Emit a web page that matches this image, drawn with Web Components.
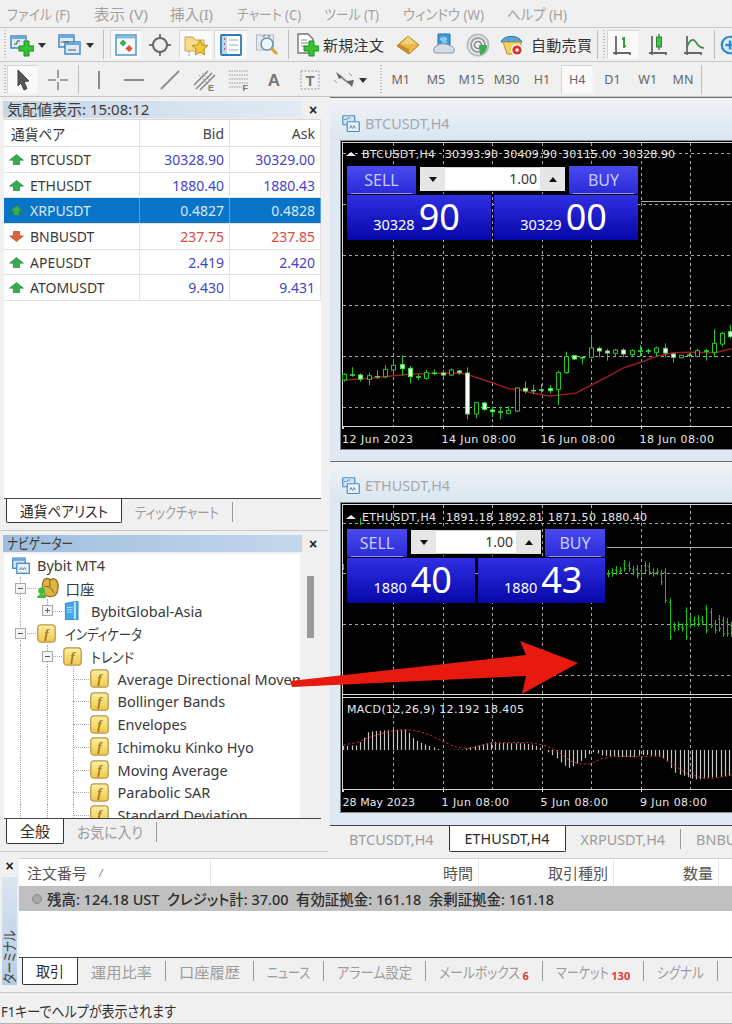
<!DOCTYPE html>
<html lang="ja">
<head>
<meta charset="utf-8">
<title>MT4</title>
<style>
  html, body { margin: 0; height: 1024px; overflow: hidden; background: #f0f0f0; }
  body { font-family: "Noto Sans", "Noto Sans CJK JP", sans-serif; font-size: 14px; color: #333; position: relative; font-feature-settings: "palt"; }
  .main { display: flex; height: 758px; }
  .left { width: 328px; flex: none; display: flex; flex-direction: column; }
</style>
</head>
<body>
  <mt-menubar></mt-menubar>
  <mt-toolbar row="1"></mt-toolbar>
  <mt-toolbar row="2"></mt-toolbar>
  <div class="main">
    <div class="left">
      <mt-panel label="気配値表示: 15:08:12" tone="pale" height="434"><mt-market-watch></mt-market-watch></mt-panel>
      <mt-panel label="ナビゲーター" label-w="66" tone="deep" height="321"><mt-navigator></mt-navigator></mt-panel>
    </div>
    <mt-mdi>
      <mt-chart-window label="BTCUSDT,H4" chart="btc" height="364" head="43"></mt-chart-window>
      <mt-chart-window label="ETHUSDT,H4" chart="eth" height="364" head="41"></mt-chart-window>
      <mt-tabs tabs="BTCUSDT,H4|ETHUSDT,H4|XRPUSDT,H4|BNBUSDT,H4" active="1" start="4" height="27" pad="15" size="14.4"></mt-tabs>
    </mt-mdi>
  </div>
  <mt-terminal></mt-terminal>
  <mt-statusbar><span data-w="175">F1キーでヘルプが表示されます</span></mt-statusbar>
  <mt-arrow></mt-arrow>

<script>
// Meiryo UI kana are narrower than Noto's: squeeze a text to the width it has in the shot
const fit = root => root.querySelectorAll("[data-w]").forEach(e => {
  e.style.display = "inline-block";
  e.style.flex = "none";
  e.style.whiteSpace = "pre";
  const w = +e.dataset.w, natural = e.getBoundingClientRect().width;
  e.style.width = `${w}px`;
  e.style.transform = `scaleX(${w / natural})`;
  e.style.transformOrigin = "0 50%";
});

const svg = (s, w = 24, h = 24) => `<svg width="${w}" height="${h}" viewBox="0 0 24 24">${s}</svg>`;

const plus = `<path d="M14 8h5v5h5v5h-5v5h-5v-5H9v-5h5z" fill="#35c335" stroke="#1d8f1d"/>`;
const tinyWin = (x, y) => `<rect x="${x}" y="${y}" width="15" height="12" fill="#dcebf8" stroke="#3d7fb8" stroke-width="1.4"/><rect x="${x}" y="${y}" width="15" height="3" fill="#6ea6d6"/>`;
const axes = `<path d="M5 3v17M19 20H2M5 20v2M19 19v3" stroke="#666" stroke-width="1.8" fill="none"/>`;

const icons = {
  newChart: svg(`${tinyWin(1, 3)}<path d="M4 11h3V8h3" stroke="#555" fill="none"/>${plus}`),
  profile: svg(`${tinyWin(1, 2)}${tinyWin(7, 9)}<path d="M3 9h8M10 17h8" stroke="#555" fill="none"/>`),
  market: svg(`<rect x="2" y="2" width="20" height="20" fill="#f6f9fc" stroke="#5b9ccb" stroke-width="1.6"/><rect x="3" y="3" width="18" height="2.5" fill="#8abce0"/><path d="M9 6.5l3.5 3.5L9 13.5 5.5 10z" fill="#3cae55"/><path d="M15 12l3.5 3.5L15 19l-3.5-3.5z" fill="#e0562c"/>`),
  cross: svg(`<path d="M12 1v22M1 12h22" stroke="#777" stroke-width="2"/><circle cx="12" cy="12" r="7" fill="#f0f0f0" stroke="#666" stroke-width="2"/>`),
  folder: svg(`<path d="M1 4h8l2 3h9v11H1z" fill="#f6dc8a" stroke="#c9a64a"/><path d="M16 7l2.4 5 5.4.6-4 3.8 1 5.4-4.8-2.6-4.8 2.6 1-5.4-4-3.8 5.4-.6z" fill="#f2c53d" stroke="#b98f1f"/><path d="M5 18v5" stroke="#999" stroke-dasharray="2 1"/>`),
  list: svg(`<rect x="2" y="2" width="20" height="20" rx="1" fill="#fff" stroke="#2d7ab8" stroke-width="1.8"/><rect x="3" y="3" width="5" height="18" fill="#b8d8f0"/><path d="M10 7h9M10 12h9M10 17h9" stroke="#9ab" /><path d="M5 6h1M5 11h1M5 16h1" stroke="#e04040" stroke-width="2"/>`),
  mag: svg(`<rect x="1.5" y="2" width="17" height="15" fill="#e6e8ee" stroke="#b0b8c4"/><circle cx="12" cy="11" r="6" fill="#eef6fc" stroke="#6f95b5" stroke-width="1.6"/><path d="M8 4l2-2M15 4l-2-2" stroke="#6f95b5" stroke-width="1.5"/><path d="M16 15l6 6" stroke="#d9a53a" stroke-width="3"/>`),
  order: svg(`<path d="M3 1h10l5 5v14H3z" fill="#fff" stroke="#777" stroke-width="1.4"/><path d="M6 7h6M6 10h8M6 13h4" stroke="#888"/>${plus}`),
  gold: svg(`<path d="M12 3l11 9-10 9L1 13z" fill="#e9b94a" stroke="#a67c1f"/><path d="M12 3l8 8H6z" fill="#f3d27d"/><path d="M1 13l12 8v-5L3 11z" fill="#c08f2a"/>`),
  server: svg(`<path d="M6 1h12v11H6z" fill="#3d9be0" stroke="#1f6fb0"/><path d="M9 5h5v2h-5zM10 9h5" stroke="#d4ecfb" fill="none"/><path d="M3 20a4 4 0 0 1 2-7c1-3 11-3 13 0a4 4 0 0 1 3 7z" fill="#d6dde4" stroke="#8b99a8"/>`),
  signal: svg(`<circle cx="12" cy="12" r="10.5" fill="none" stroke="#b8bec3" stroke-width="2"/><circle cx="12" cy="12" r="7" fill="none" stroke="#9aa2a8" stroke-width="2"/><circle cx="12" cy="12" r="3.5" fill="none" stroke="#7d868d" stroke-width="1.6"/><path d="M13 12h8a9 9 0 0 1-7 10z" fill="#3dab4f"/>`),
  auto: svg(`<path d="M1 9c2-7 17-8 21 0z" fill="#56a4d8" stroke="#2d76aa"/><path d="M3 9h18v12H7z" fill="#f3d060" stroke="#bd9631"/><circle cx="17" cy="17" r="6" fill="#fff"/><circle cx="17" cy="17" r="4.6" fill="#d8322a"/><circle cx="17" cy="17" r="1.8" fill="#fff"/>`),
  bars: svg(`${axes}<path d="M13 4v11M13 6h-2M13 13h2" stroke="#2da838" stroke-width="2" fill="none"/>`),
  candle: svg(`${axes}<path d="M12 1v16" stroke="#333"/><rect x="9.5" y="4" width="5" height="10" fill="#45c04a" stroke="#2a8a2e"/>`),
  line: svg(`${axes}<path d="M5 14c3-8 6-8 8-6s3 7 9 7" stroke="#2f8f3c" stroke-width="1.6" fill="none"/>`),
  zoomIn: svg(`<circle cx="12" cy="12" r="9" fill="#d8ecfa" stroke="#2f88cc" stroke-width="2.4"/><path d="M12 7v10M7 12h10" stroke="#2f88cc" stroke-width="2.6"/>`),
  cursor: svg(`<path d="M7 2l11 11-5 .6 3 7-3 1.4-3-7L7 18z" fill="#555" stroke="#444"/>`),
  thin: svg(`<path d="M12 2v8M12 14v8M2 12h8M14 12h8" stroke="#888" stroke-width="1.6"/>`),
  vline: svg(`<path d="M12 3v18" stroke="#8a8a8a" stroke-width="2"/>`),
  hline: svg(`<path d="M2 12h20" stroke="#8a8a8a" stroke-width="2"/>`),
  trend: svg(`<path d="M3 21L21 3" stroke="#8a8a8a" stroke-width="1.8"/>`),
  channel: svg(`<path d="M1 17L15 3M3 21L19 5M7 22L22 7" stroke="#888" stroke-width="1.6"/><path d="M6 7l9 9M9 5l8 8" stroke="#999" stroke-dasharray="2 1"/><text x="15" y="22.5" font-size="9" font-weight="700" font-family="Liberation Sans" fill="#777">E</text>`),
  fib: svg(`<path d="M2 3h20M2 7h20M2 11h20M2 15h20M2 19h13" stroke="#999" stroke-dasharray="1.5 1"/><text x="15.5" y="22.5" font-size="9" font-weight="700" font-family="Liberation Sans" fill="#777">F</text>`),
  textA: svg(`<text x="12" y="18" text-anchor="middle" font-size="17" font-weight="700" font-family="Liberation Sans" fill="#777">A</text>`),
  textT: svg(`<rect x="3" y="3" width="18" height="18" fill="none" stroke="#999" stroke-dasharray="2 1.5"/><text x="12" y="18" text-anchor="middle" font-size="15" font-weight="700" font-family="Liberation Sans" fill="#777">T</text>`),
  arrows: svg(`<path d="M3 4l7 5-4 2z" fill="#666"/><path d="M8 9l9 7" stroke="#888" stroke-width="1.6"/><path d="M14 13l7-1-2 7z" fill="#666"/><path d="M1 12l3 3M16 5l3 3" stroke="#999"/>`),
  up: svg(`<path d="M12 4l11 9h-6v7H7v-7H1z" fill="#35ad50" stroke="#1d7a34"/>`, 15, 15),
  down: svg(`<path d="M12 20L1 11h6V4h10v7h6z" fill="#e0603a" stroke="#b33e1e"/>`, 15, 15),
  winTitle: svg(`<rect x="1" y="1" width="16" height="12" rx="1" fill="#cfe3f5" stroke="#4b8ec6" stroke-width="1.6"/><rect x="7" y="9" width="16" height="13" rx="1" fill="#e8f2fb" stroke="#4b8ec6" stroke-width="1.6"/><path d="M10 18l2-4 2 4 2-4 2 4" stroke="#4b6e8e" fill="none"/><path d="M3 6h3l2-2h3" stroke="#4b6e8e" fill="none"/>`, 18, 18),
  terminal: svg(`<rect x="2" y="4" width="15" height="12" fill="#cfe3f5" stroke="#4b8ec6" stroke-width="1.6"/><rect x="7" y="10" width="15" height="12" fill="#e8f2fb" stroke="#4b8ec6" stroke-width="1.6"/><rect x="2" y="3" width="15" height="4" fill="#6ea6d6"/><path d="M10 18l2-3 2 3 2-3 2 3" stroke="#4b6e8e" fill="none"/>`, 20, 20),
  accounts: svg(`<path d="M7 4c2-3 5-3 7-1 3-2 7-1 8 2 2 4 1 12-2 15-3 2-8 2-11 0-3-4-4-12-2-16z" fill="#dcb444" stroke="#8e7020" stroke-width="1.4"/><path d="M14 3v8l5 7M8 10l6 1" stroke="#7a6018" fill="none"/><circle cx="5" cy="15" r="3.6" fill="#3dbb3d"/><path d="M0 23c1-6 9-6 10 0z" fill="#3dbb3d"/>`, 22, 22),
  serverBlue: svg(`<path d="M3 3l16-3v24H3z" fill="#45a6e8" stroke="#1f78b8"/><path d="M15 1v22" stroke="#bfe3fa" stroke-width="2.4"/><path d="M5 8h7M5 11h7M5 14h7" stroke="#d5eefc"/>`, 19, 19),
  func: svg(`<defs><linearGradient id="fy" x1="0" y1="0" x2="0" y2="1"><stop offset="0" stop-color="#fbf0a4"/><stop offset="1" stop-color="#eec94a"/></linearGradient></defs><rect x="1" y="1" width="22" height="22" rx="4" fill="url(#fy)" stroke="#b9974a" stroke-width="1.6"/><text x="12" y="18" text-anchor="middle" font-size="17" font-style="italic" font-weight="700" font-family="Liberation Serif" fill="#a8781a">f</text>`, 19, 19),
};

/* ---- chrome ---- */
class MtMenubar extends HTMLElement {
  connectedCallback() {
    if (this.shadowRoot) return;
    const items = [["ファイル (F)", 87, 63], ["表示 (V)", 76, 54], ["挿入(I)", 67, 43], ["チャート (C)", 87, 64], ["ツール (T)", 79, 55], ["ウィンドウ (W)", 104, 81], ["ヘルプ (H)", 80, 60]];
    this.attachShadow({ mode: "open" });
    this.shadowRoot.innerHTML = `<style>
      :host { display: flex; height: 27px; border-bottom: 1px solid #c6c6c6; padding-left: 7px; align-items: center; color: #a2a2a2; font-size: 14.5px; white-space: nowrap; }
      div { flex: none; }
    </style>${items.map(([t, w, tw]) => `<div style="width:${w}px"><span data-w="${tw}">${t}</span></div>`).join("")}`;
    fit(this.shadowRoot);
  }
}

const toolbars = {
  1: [["grip", 6], ["icon", "newChart", 27], ["drop", 13], ["gap", 8], ["icon", "profile", 28], ["drop", 12], ["sep", 14],
      ["on", "market", 31], ["icon", "cross", 38], ["on", "folder", 33], ["gap", 2], ["on", "list", 33], ["icon", "mag", 39], ["sep", 4],
      ["icon", "order", 33], ["text", "新規注文", 64], ["icon", "gold", 42], ["icon", "server", 30], ["icon", "signal", 37], ["icon", "auto", 31], ["gap", 4],
      ["text", "自動売買", 62], ["sep", 8], ["grip", 6], ["on", "bars", 32], ["icon", "candle", 40], ["icon", "line", 30], ["sep", 10], ["icon", "zoomIn", 22]],
  2: [["grip", 5], ["on", "cursor", 31], ["icon", "thin", 39], ["sep", 2], ["icon", "vline", 40], ["icon", "hline", 30], ["icon", "trend", 42],
      ["icon", "channel", 28], ["icon", "fib", 40], ["icon", "textA", 30], ["icon", "textT", 42], ["icon", "arrows", 28], ["drop", 8], ["gap", 11], ["grip", 5],
      ["tf", "M1"], ["tf", "M5"], ["tf", "M15"], ["tf", "M30"], ["tf", "H1"], ["tfOn", "H4"], ["tf", "D1"], ["tf", "W1"], ["tf", "MN"], ["sep", 2]],
};

class MtToolbar extends HTMLElement {
  connectedCallback() {
    if (this.shadowRoot) return;
    const row = this.getAttribute("row");
    const html = toolbars[row].map(it => {
      const [kind, a, b] = it;
      switch (kind) {
        case "grip": return `<i class="grip" style="width:${a}px"></i>`;
        case "gap": return `<i style="width:${a}px;flex:none"></i>`;
        case "sep": return `<i class="sep" style="width:${a}px"></i>`;
        case "drop": return `<i class="drop" style="width:${a}px"></i>`;
        case "icon": return `<span class="btn" style="width:${b}px">${icons[a]}</span>`;
        case "on": return `<span class="btn on" style="width:${b}px">${icons[a]}</span>`;
        case "text": return `<span class="btn txt" style="width:${b}px">${a}</span>`;
        case "tf": return `<span class="btn tf">${a}</span>`;
        case "tfOn": return `<span class="btn tf on">${a}</span>`;
      }
    }).join("");
    this.attachShadow({ mode: "open" });
    this.shadowRoot.innerHTML = `<style>
      :host { display: flex; align-items: stretch; box-sizing: border-box; border-bottom: 1px solid #c6c6c6; overflow: hidden; height: ${row == 1 ? 34 : 35}px; padding: ${row == 1 ? 2 : 3}px 0 2px 2px; }
      .btn { flex: none; display: flex; align-items: center; justify-content: center; box-sizing: border-box; overflow: hidden; }
      .on { background: #fafafa; border: 1px solid #d6d6d6; border-right-color: #f6f6f6; border-bottom-color: #f6f6f6; }
      .txt { font-size: 15px; color: #333; white-space: nowrap; justify-content: flex-start; letter-spacing: .3px; }
      .tf { width: 35.3px; font-size: 12.5px; color: #666; }
      .tf.on { margin: 0 1.6px; width: 32.1px; }
      .grip { flex: none; background: repeating-linear-gradient(#b8b8b8 0 1px, transparent 1px 3px) center / 2px 100% no-repeat; }
      .sep { flex: none; background: linear-gradient(#bdbdbd, #bdbdbd) center / 1px 100% no-repeat; }
      .drop { flex: none; position: relative; }
      .drop::after { content: ""; position: absolute; left: 50%; top: 50%; margin: -2px 0 0 -4px; border: 4px solid transparent; border-top: 5px solid #333; border-bottom: 0; }
    </style>${html}`;
  }
}

class MtPanel extends HTMLElement {
  connectedCallback() {
    if (this.shadowRoot) return;
    const deep = this.getAttribute("tone") == "deep";
    const w = this.getAttribute("label-w");
    this.attachShadow({ mode: "open" });
    this.shadowRoot.innerHTML = `<style>
      :host { display: flex; flex-direction: column; height: ${this.getAttribute("height")}px; box-sizing: border-box; padding-top: 4px; border-bottom: 1px solid #c9c9c9; }
      .head { display: flex; height: 17px; flex: none; align-items: center; }
      .title { width: 299px; margin-left: 3px; height: 100%; box-sizing: border-box; padding-left: 4px; line-height: 16px; font-size: 15px; color: #3c3c3c; white-space: nowrap;
        background: linear-gradient(90deg, ${deep ? "#9fbddd, #c4d7ec" : "#c6d6e6, #e2ebf4"}); }
      .x { width: 22px; text-align: center; font: 700 14px "Liberation Sans", sans-serif; color: #222; }
      .body { flex: 1; min-height: 0; margin: 1px 7px 0 4px; display: flex; flex-direction: column; }
    </style><div class="head"><div class="title"><span ${w ? `data-w="${w}"` : ""}>${this.getAttribute("label")}</span></div><div class="x">×</div></div><div class="body"><slot></slot></div>`;
    fit(this.shadowRoot);
  }
}

class MtTabs extends HTMLElement {
  connectedCallback() {
    if (this.shadowRoot) return;
    const active = +this.getAttribute("active");
    const tabs = this.getAttribute("tabs").split("|");
    const html = tabs.map((t, i) => {
      const [text, badge] = t.split("^");
      const [label, w] = text.split(":");
      const sep = i != active && i != active - 1;
      return `<div class="tab ${i == active ? "on" : ""}"><span ${w ? `data-w="${w}"` : ""}>${label}</span>${badge ? `<b>${badge}</b>` : ""}</div>${sep ? '<i class="sep"></i>' : ""}`;
    }).join("");
    const pad = +this.getAttribute("pad") || 13;
    this.attachShadow({ mode: "open" });
    this.shadowRoot.innerHTML = `<style>
      :host { display: flex; flex: none; height: ${this.getAttribute("height")}px; box-sizing: border-box; border-top: 1.5px solid #444; padding-left: ${this.getAttribute("start") || 0}px; overflow: hidden; white-space: nowrap; align-items: flex-start; font-size: ${this.getAttribute("size") || 15}px; color: #9c9c9c; }
      .tab { flex: none; height: 100%; padding: 0 ${pad}px; display: flex; align-items: center; box-sizing: border-box; }
      .on { background: #fff; color: #2c2c2c; border: 1.5px solid #333; border-top: 0; border-radius: 0 0 2px 2px; margin-top: -1px; height: calc(100% + 1px); padding: 0 ${pad}px; }
      .sep { flex: none; width: 1px; height: 20px; margin-top: 3px; background: #9a9a9a; }
      b { color: #e23a3a; font-size: 11px; align-self: flex-end; margin: 0 0 1px 2.5px; line-height: 16px; }
    </style>${html}`;
    fit(this.shadowRoot);
  }
}

/* ---- market watch ---- */
class MtMarketWatch extends HTMLElement {
  connectedCallback() {
    if (this.shadowRoot) return;
    const rows = [
      ["BTCUSDT", "30328.90", "30329.00", "up"], ["ETHUSDT", "1880.40", "1880.43", "up"], ["XRPUSDT", "0.4827", "0.4828", "up", "sel"],
      ["BNBUSDT", "237.75", "237.85", "down"], ["APEUSDT", "2.419", "2.420", "up"], ["ATOMUSDT", "9.430", "9.431", "up"],
    ];
    const body = rows.map(([s, b, a, d, sel]) => `<div class="row ${d} ${sel || ""}">
      <div class="sym">${icons[d]}<span>${s}</span></div><div class="num">${b}</div><div class="num">${a}</div></div>`).join("");
    this.attachShadow({ mode: "open" });
    this.shadowRoot.innerHTML = `<style>
      :host { display: flex; flex-direction: column; flex: 1; min-height: 0; font-size: 14px; }
      .table { flex: 1; background: #fff; border-top: 1px solid #d8d8d8; }
      .row { display: grid; grid-template-columns: 136px 90px 91px; height: 25.7px; box-sizing: border-box; border-bottom: 1px solid #e2e2e2; align-items: stretch; }
      .row > div { display: flex; align-items: center; border-right: 1px solid #e4e4e4; box-sizing: border-box; }
      .head { height: 27px; color: #444; }
      .head .num { color: #444; }
      .sym { padding-left: 5px; gap: 6px; color: #3a3a3a; }
      .sym svg { flex: none; }
      .head .sym { padding-left: 7px; font-size: 15px; }
      .num { justify-content: flex-end; padding-right: 5px; }
      .up .num { color: #4444cc; }
      .down .num { color: #e04848; }
      .sel { background: #0a74c9; }
      .sel .sym, .sel .num { color: #d7e8f7; }
      .sel > div { border-right-color: #5aa0d8; }
    </style><div class="table">
      <div class="row head"><div class="sym"><span data-w="54">通貨ペア</span></div><div class="num">Bid</div><div class="num">Ask</div></div>${body}
    </div><mt-tabs tabs="通貨ペアリスト:88|ティックチャート:84" active="0" start="2" height="25"></mt-tabs><div style="height:7px"></div>`;
    fit(this.shadowRoot);
  }
}

/* ---- navigator ---- */
class MtNavigator extends HTMLElement {
  connectedCallback() {
    if (this.shadowRoot) return;
    const indi = ["Average Directional Movement Index", "Bollinger Bands", "Envelopes", "Ichimoku Kinko Hyo", "Moving Average", "Parabolic SAR", "Standard Deviation"];
    const rows = [
      { d: 0, icon: "terminal", t: "Bybit MT4" },
      { d: 1, icon: "accounts", t: "口座", tog: "-", g: [], lm: 7 },
      { d: 2, icon: "serverBlue", t: "BybitGlobal-Asia", tog: "+", g: [1], last: true },
      { d: 1, icon: "func", t: "インディケータ", tog: "-", g: [], w: 77 },
      { d: 2, icon: "func", t: "トレンド", tog: "-", g: [1], w: 43 },
      ...indi.map(t => ({ d: 3, icon: "func", t, g: [1, 1] })),
    ];
    const html = rows.map(r => {
      if (!r.d) return `<div class="row root"><span class="ic">${icons[r.icon]}</span><span class="lb">${r.t}</span></div>`;
      const guides = r.g.map(() => `<i class="cell guide"></i>`).join("");
      const tog = r.tog ? `<i class="tog ${r.tog == "+" ? "plus" : ""}"></i>` : "";
      const lm = r.lm ? ` style="margin-left:${r.lm}px"` : "";
      return `<div class="row">${guides}<i class="cell conn ${r.last ? "last" : ""}">${tog}</i><span class="ic">${icons[r.icon]}</span><span class="lb"${lm}${r.w ? ` data-w="${r.w}"` : ""}>${r.t}</span></div>`;
    }).join("");
    this.attachShadow({ mode: "open" });
    this.shadowRoot.innerHTML = `<style>
      :host { display: flex; flex-direction: column; flex: 1; min-height: 0; margin-top: 1px; font-size: 14.5px; }
      .wrap { flex: 1; min-height: 0; display: flex; overflow: hidden; }
      .tree { width: 296px; flex: none; background: #fff; overflow: hidden; }
      .scroll { flex: 1; padding: 22px 0 0 7px; }
      .thumb { width: 7px; height: 62px; background: #9a9a9a; }
      .row { display: flex; align-items: center; height: 22.7px; padding-left: 3px; white-space: nowrap; color: #3a3a3a; }
      .root { padding-left: 7px; }
      .root .lb { margin-left: 6px; }
      .cell { flex: none; position: relative; width: 26.5px; height: 100%; }
      .guide::before, .conn::before { content: ""; position: absolute; left: 13px; top: 0; bottom: 0; border-left: 1px dotted #a8a8a8; }
      .conn.last::before { bottom: 50%; }
      .conn::after { content: ""; position: absolute; left: 13px; right: -2px; top: 50%; border-top: 1px dotted #a8a8a8; }
      .tog { position: absolute; z-index: 1; left: 8px; top: 50%; margin-top: -5.5px; width: 11px; height: 11px; box-sizing: border-box; border: 1px solid #a9a9a9; background: linear-gradient(90deg, transparent 2px, #555 2px, #555 7px, transparent 7px) center / 100% 1px no-repeat, #f4f4f4; }
      .tog.plus { background: linear-gradient(90deg, transparent 2px, #4a6fa5 2px, #4a6fa5 7px, transparent 7px) center / 100% 1px no-repeat, linear-gradient(transparent 2px, #4a6fa5 2px, #4a6fa5 7px, transparent 7px) center / 1px 100% no-repeat, #f4f4f4; }
      .ic { flex: none; margin-left: 3px; display: flex; }
      .root .ic { margin-left: 0; }
      .lb { margin-left: 9px; }
    </style><div class="wrap"><div class="tree">${html}</div><div class="scroll"><div class="thumb"></div></div></div>
    <mt-tabs tabs="全般:30|お気に入り:66" active="0" start="2" height="26"></mt-tabs><div style="height:7px"></div>`;
    fit(this.shadowRoot);
  }
}

/* ---- charts ---- */
const gridX = [393, 443, 492, 542, 591, 641, 690];
const lerp = (pts, x) => {
  for (let i = 1; i < pts.length; i++) {
    if (x <= pts[i][0]) {
      const [x0, y0] = pts[i - 1], [x1, y1] = pts[i];
      return y0 + (y1 - y0) * (x - x0) / (x1 - x0);
    }
  }
  return pts[pts.length - 1][1];
};

const lbl = ([x, len, t], y) => `<text x="${x}" y="${y}" class="lbl" textLength="${len}" lengthAdjust="spacing">${t}</text>`;

const frame = (top, grids, axisY, labels, head, headY, bottom) => {
  let s = `<rect x="340" y="${top}" width="392" height="${bottom - top}" fill="#000"/>`;
  s += grids.map(y => `<path d="M343 ${y}.5H732" class="grid"/>`).join("");
  s += gridX.map(x => `<path d="M${x}.5 ${top + 3}V${axisY}" class="grid"/>`).join("");
  s += `<path d="M342.5 ${top + 2}V${axisY + 3}M342.5 ${top + 2}.5H732M343 ${axisY}.5H732" class="axis"/>`;
  s += [343, 443, 542, 641].map(x => `<path d="M${x}.5 ${axisY}v3" class="axis"/>`).join("");
  s += labels.map(l => lbl(l, axisY + 17)).join("");
  s += `<path d="M346 ${headY - 2}l5-4 5 4z" fill="#eee"/>` + head.map(l => lbl(l, headY)).join("");
  s += `<path d="M340.5 ${top}V${bottom - .5}H732M340 ${top}.5H732" fill="none" stroke="#8a8a8a"/>`;
  return s;
};

const drawBtc = () => {
  const cs = [[283,300,280,305,0],[285,285,262,290,2],[285,297,280,305,1],[287,298,278,316,0],[290,290,270,297,2],[268,290,256,295,0],[256,270,238,285,0],[254,266,226,287,1],[265,290,258,310,1],[291,291,283,300,2],[278,295,270,300,0],[280,280,268,285,2],[279,285,270,295,1],[270,285,265,288,0],[273,278,270,285,1],[279,402,262,418,1],[368,402,365,415,0],[369,388,366,392,1],[390,395,380,412,1],[396,396,380,418,2],[391,400,378,403,0],[324,393,322,396,0],[325,333,304,340,1],[332,332,315,342,2],[330,330,312,340,2],[326,332,315,340,1],[278,328,272,375,0],[230,278,215,282,0],[227,237,225,240,1],[233,233,230,253,2],[204,232,165,235,0],[205,213,200,232,1],[213,219,207,242,1],[210,220,207,232,0],[210,222,205,232,1],[212,224,208,228,0],[213,213,195,230,2],[213,213,206,222,2],[204,217,200,230,0],[205,219,190,232,1],[222,232,218,248,1],[226,233,224,235,0],[226,226,220,232,2],[212,229,207,232,0],[213,213,206,242,2],[190,217,148,232,0],[160,192,155,200,0],[155,170,135,175,1]];
  const ma = [[42,300],[91,297],[140,293],[190,287],[239,283],[314,280],[388,280],[412,283],[437,292],[487,308],[536,326],[561,327],[610,340],[660,348],[735,340],[784,315],[833,290],[882,263],[932,247],[982,228],[1031,218],[1081,217],[1155,218],[1205,206]];
  const Y = z => 280 + z / 3;
  let s = frame(140, [153, 204, 255, 305, 356, 407], 426,
    [[342, 71, "12 Jun 2023"], [441.5, 74.5, "14 Jun 08:00"], [540.5, 74.5, "16 Jun 08:00"], [639.5, 74.5, "18 Jun 08:00"]],
    [[362, 73, "BTCUSDT,H4"], [445, 53, "30393.90"], [503, 54, "30409.90"], [562, 54, "30115.00"], [622, 53, "30328.90"]], 158, 450);
  s += `<path d="M641 201.5H732" stroke="#aaa"/>`;
  s += `<polyline points="${ma.map(([x, y]) => `${330 + x / 3},${Y(y)}`).join(" ")}" fill="none" stroke="#9a1c1c" stroke-width="1.5"/>`;
  cs.forEach(([t, b, hi, lo, kind], i) => {
    const x = Math.round(344 + i * 8.22) + .5;
    s += `<path d="M${x} ${Y(hi)}V${Y(lo)}" stroke="#22c822"/>`;
    if (kind == 2) s += `<path d="M${x - 2.5} ${Y(t)}h5" stroke="#3ee83e" stroke-width="1.5"/>`;
    else s += `<rect x="${x - 2}" y="${Y(t)}" width="4" height="${(b - t) / 3}" fill="${kind ? "#f6fff4" : "#000"}" stroke="${kind ? "#3ee83e" : "#22c822"}"/>`;
  });
  return s;
};

const drawEth = () => {
  const highs = [330,325,318,322,300,305,318,315,320,305,308,325,325,330,325,415,488,485,490,442,465,470,465,468,435,445,480,465,470,475,485];
  const lows = [352,350,345,340,335,335,345,355,350,340,345,350,345,375,430,540,515,510,515,540,505,500,500,495,520,505,520,515,530,530,530];
  const hist = [[40,258],[80,256],[100,235],[115,215],[180,210],[230,210],[250,235],[265,245],[290,255],[310,262],[325,268],[340,270],[400,268],[420,262],[440,258],[470,250],[490,245],[510,248],[540,250],[570,250],[600,252],[620,258],[640,268],[660,280],[680,295],[700,315],[720,325],[735,315],[750,305],[765,295],[780,280],[795,275],[810,285],[830,288],[850,290],[870,292],[890,290],[910,293],[930,285],[950,285],[970,288],[990,290],[1010,300],[1030,335],[1050,345],[1070,350],[1090,358],[1110,358],[1130,355],[1150,352],[1170,350],[1190,348],[1206,348]];
  const sig = [[40,255],[80,248],[110,235],[150,222],[190,212],[230,208],[270,215],[300,225],[340,245],[380,262],[420,265],[470,252],[520,248],[600,248],[640,255],[680,272],[720,302],[750,312],[780,312],[810,298],[850,288],[930,290],[990,288],[1030,315],[1070,340],[1110,352],[1150,355],[1206,345]];
  let s = frame(502, [523, 573, 624, 675], 789,
    [[342.5, 72.5, "28 May 2023"], [441.5, 67.5, "1 Jun 08:00"], [540.5, 67.5, "5 Jun 08:00"], [640, 67, "9 Jun 08:00"]],
    [[362, 74, "ETHUSDT,H4"], [446, 47, "1891.18"], [498, 45, "1892.81"], [548, 48, "1871.50"], [601, 46, "1880.40"]], 521, 813);
  s += `<rect x="343" y="694" width="389" height="3.5" fill="#000"/><path d="M342 694.5H732M342 697.5H732" class="axis"/>`;
  s += `<path d="M607 547.5H732" stroke="#aaa"/>`;
  s += `<path d="M360.5 518v7M343.5 564v6" stroke="#1cc81c"/>`;
  highs.forEach((h, i) => {
    const x = Math.round(608 + i * 4.1) + .5, y1 = 460 + h / 3, y2 = 460 + lows[i] / 3;
    s += `<path d="M${x} ${y1}V${y2}M${x - 1.5} ${y1 + 4}h1.5M${x} ${y2 - 3}h1.5" stroke="#14c414" fill="none"/>`;
  });
  for (let zx = 40; zx <= 1206; zx += 12.3) {
    const x = 330 + zx / 3;
    s += `<path d="M${Math.round(x) + .5} 750V${660 + lerp(hist, zx) / 3}" stroke="#c4c4c4" stroke-width="1.2"/>`;
  }
  s += `<polyline points="${sig.map(([x, y]) => `${330 + x / 3},${660 + y / 3}`).join(" ")}" fill="none" stroke="#c92a2a" stroke-dasharray="2.5 2"/>`;
  s += lbl([347, 177, "MACD(12,26,9) 12.192 18.405"], 713);
  return s;
};

class MtChart extends HTMLElement {
  connectedCallback() {
    if (this.shadowRoot) return;
    const kind = this.getAttribute("kind");
    const top = kind == "btc" ? 140 : 502, h = kind == "btc" ? 310 : 311;
    this.attachShadow({ mode: "open" });
    this.shadowRoot.innerHTML = `<style>
      :host { display: block; position: relative; height: ${h}px; background: #000; overflow: hidden; }
      svg { display: block; }
      .grid { stroke: #a6a6a6; stroke-dasharray: 3 3; fill: none; }
      .axis { stroke: #d8d8d8; fill: none; }
      .lbl { font: 11px "DejaVu Sans", sans-serif; fill: #e8e8e8; }
    </style><svg width="392" height="${h}" viewBox="340 ${top} 392 ${h}">${kind == "btc" ? drawBtc() : drawEth()}</svg><slot></slot>`;
  }
}

class MtTradePanel extends HTMLElement {
  connectedCallback() {
    if (this.shadowRoot) return;
    const a = n => this.getAttribute(n);
    const big = (small, large) => `<div class="price"><span class="sm">${small}</span><span class="lg">${large}</span></div>`;
    this.attachShadow({ mode: "open" });
    this.shadowRoot.innerHTML = `<style>
      :host { position: absolute; left: 7px; top: ${a("top")}px; width: ${a("width")}px; display: flex; flex-direction: column; gap: 1px; color: #fff; font-family: "Noto Sans", sans-serif; }
      .top { display: flex; gap: 2px; height: 28px; }
      .side { width: ${a("side")}px; flex: none; background: linear-gradient(#4a4aee, #2a2ad8); color: #c6ccff; font-size: 16px; display: flex; align-items: center; justify-content: center; position: relative; }
      .side::after { content: ""; position: absolute; left: 4px; right: 4px; bottom: 0; height: 1px; background: #8f97f0; }
      .spin { flex: 1; display: flex; height: 25.5px; background: #fff; margin: 0 1px; border: 1px solid #000; box-shadow: 0 0 0 1px #d0d0d0 inset; box-sizing: border-box; color: #333; align-items: stretch; }
      .btn { width: 25px; flex: none; background: #e6e6e6; position: relative; }
      .btn::after { content: ""; position: absolute; left: 50%; top: 50%; margin: -2px 0 0 -4px; border: 4px solid transparent; }
      .dn::after { border-top: 5px solid #111; border-bottom: 0; }
      .upb::after { border-bottom: 5px solid #111; border-top: 0; }
      .val { flex: 1; text-align: right; font-size: 14px; line-height: 24px; padding-right: 3px; }
      .bottom { display: flex; gap: 3px; height: 45px; }
      .price { flex: 1; box-sizing: border-box; padding: 2px ${a("shift-r") || 0}px 0 ${a("shift-l") || 0}px; background: linear-gradient(#2f2fe4, #0707a8); display: flex; align-items: baseline; justify-content: center; gap: 4px; line-height: 45px; }
      .sm { font-size: 14.5px; }
      .lg { font-size: 36px; line-height: 40px; }
    </style><div class="top"><div class="side">SELL</div><div class="spin"><div class="btn dn"></div><div class="val">1.00</div><div class="btn upb"></div></div><div class="side">BUY</div></div>
    <div class="bottom">${big(a("bid"), a("bid-big"))}${big(a("ask"), a("ask-big"))}</div>`;
  }
}

class MtChartWindow extends HTMLElement {
  connectedCallback() {
    if (this.shadowRoot) return;
    const kind = this.getAttribute("chart");
    const head = +this.getAttribute("head");
    const panel = kind == "btc"
      ? `<mt-trade-panel top="26" width="291" side="69" shift-r="5" bid="30328" bid-big="90" ask="30329" ask-big="00"></mt-trade-panel>`
      : `<mt-trade-panel top="27" width="258" side="60" shift-l="4" bid="1880" bid-big="40" ask="1880" ask-big="43"></mt-trade-panel>`;
    this.attachShadow({ mode: "open" });
    this.shadowRoot.innerHTML = `<style>
      :host { display: block; height: ${this.getAttribute("height")}px; box-sizing: border-box; border-top: 1px solid #6e6e6e; background: #dee9f4; overflow: hidden; }
      .title { height: ${head - 1}px; display: flex; align-items: center; gap: 5px; padding-left: 12px; background: linear-gradient(#f1f3f5, #d9e6f2); color: #a4a8ac; font-size: 14.4px; box-sizing: border-box; padding-top: ${head - 34}px; }
      svg { display: block; }
      mt-chart { margin-left: 10px; }
    </style><div class="title">${icons.winTitle}<span>${this.getAttribute("label")}</span></div><mt-chart kind="${kind}">${panel}</mt-chart>`;
  }
}

class MtMdi extends HTMLElement {
  connectedCallback() {
    if (this.shadowRoot) return;
    this.attachShadow({ mode: "open" });
    this.shadowRoot.innerHTML = `<style>
      :host { display: flex; flex-direction: column; flex: 1; min-width: 0; background: #f0f0f0; padding-left: 2px; overflow: hidden; }
    </style><slot></slot>`;
  }
}

/* ---- terminal ---- */
class MtTerminal extends HTMLElement {
  connectedCallback() {
    if (this.shadowRoot) return;
    this.attachShadow({ mode: "open" });
    this.shadowRoot.innerHTML = `<style>
      :host { display: flex; height: 138px; box-sizing: border-box; padding-top: 3px; border-bottom: 1px solid #c9c9c9; font-size: 15px; color: #333; }
      .side { width: 19px; flex: none; display: flex; flex-direction: column; }
      .x { height: 19px; text-align: center; font: 700 14px "Liberation Sans", sans-serif; color: #222; }
      .strip { flex: 1; margin: 0 2px 7px 2px; background: linear-gradient(#dbe5f0, #b4cce4); position: relative; overflow: hidden; }
      .squeeze { position: absolute; left: 0; bottom: 1px; width: 15px; transform-origin: 50% 100%; transform: scaleY(.78); }
      .squeeze span { display: block; writing-mode: vertical-rl; text-orientation: sideways; transform: rotate(180deg); font-size: 15px; line-height: 15px; color: #444; white-space: nowrap; }
      .content { flex: 1; min-width: 0; display: flex; flex-direction: column; }
      .grid { flex: 1; background: #fff; border-top: 1px solid #d0d0d0; }
      .head { display: grid; grid-template-columns: 192px 268px 135px 105px 1fr; height: 27px; border-bottom: 0; color: #555; }
      .head div { display: flex; align-items: center; justify-content: flex-end; padding-right: 5px; box-sizing: border-box; border-right: 1px solid #e6e6e6; white-space: nowrap; }
      .head div:first-child { justify-content: flex-start; padding-left: 8px; gap: 12px; }
      .head small { font-size: 10px; color: #777; font-style: italic; }
      .head div:last-child { border: 0; }
      .bal { height: 25px; background: #c0c0c0; display: flex; align-items: center; padding-left: 13px; gap: 5px; font-weight: 500; font-size: 14.4px; white-space: pre; color: #2e2e2e; }
      .dot { width: 8px; height: 8px; border-radius: 50%; border: 1.5px solid #888; background: #a8a8a8; flex: none; }
    </style>
    <div class="side"><div class="x">×</div><div class="strip"><div class="squeeze"><span>ターミナル</span></div></div></div>
    <div class="content">
      <div class="grid">
        <div class="head"><div>注文番号<small>/</small></div><div>時間</div><div>取引種別</div><div>数量</div><div></div></div>
        <div class="bal"><i class="dot"></i><span data-w="507">残高: 124.18 UST  クレジット計: 37.00  有効証拠金: 161.18  余剰証拠金: 161.18</span></div>
      </div>
      <mt-tabs tabs="取引:28|運用比率:61|口座履歴:61|ニュース:43|アラーム設定:75|メールボックス:81^6|マーケット:53^130|シグナル:47|〒" active="0" start="3" height="28"></mt-tabs>
      <div style="height:7px;flex:none"></div>
    </div>`;
    fit(this.shadowRoot);
  }
}

class MtStatusbar extends HTMLElement {
  connectedCallback() {
    if (this.shadowRoot) return;
    this.attachShadow({ mode: "open" });
    this.shadowRoot.innerHTML = `<style>
      :host { display: flex; height: 31px; box-sizing: border-box; align-items: center; padding: 4px 0 0 1px; border-bottom: 1px solid #b4b4b4; font-size: 15px; color: #333; }
    </style><slot></slot>`;
    fit(this);
  }
}

class MtArrow extends HTMLElement {
  connectedCallback() {
    if (this.shadowRoot) return;
    this.attachShadow({ mode: "open" });
    this.shadowRoot.innerHTML = `<style>
      :host { position: absolute; left: 0; top: 0; pointer-events: none; z-index: 10; }
      svg { display: block; }
    </style><svg width="732" height="1024" viewBox="0 0 732 1024"><polygon points="290,681 526,655 520,641 578,663 522,694 526,676 292,687" fill="#e8190e"/></svg>`;
  }
}

customElements.define("mt-menubar", MtMenubar);
customElements.define("mt-toolbar", MtToolbar);
customElements.define("mt-panel", MtPanel);
customElements.define("mt-tabs", MtTabs);
customElements.define("mt-market-watch", MtMarketWatch);
customElements.define("mt-navigator", MtNavigator);
customElements.define("mt-chart", MtChart);
customElements.define("mt-trade-panel", MtTradePanel);
customElements.define("mt-chart-window", MtChartWindow);
customElements.define("mt-mdi", MtMdi);
customElements.define("mt-terminal", MtTerminal);
customElements.define("mt-statusbar", MtStatusbar);
customElements.define("mt-arrow", MtArrow);
</script>
</body>
</html>
